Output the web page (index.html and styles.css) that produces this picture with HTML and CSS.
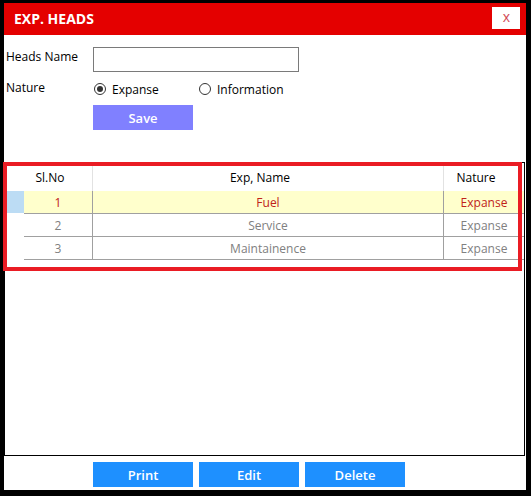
FILE: index.html
```html
<!DOCTYPE html>
<html>
<head>
<meta charset="utf-8">
<link rel="stylesheet" href="styles.css">
</head>
<body>
<div class="window">
  <div class="titlebar">
    <span class="title">EXP. HEADS</span>
    <button class="close">x</button>
  </div>
  <div class="form">
    <div class="field">
      <span class="label label-top">Heads Name</span>
      <input class="textbox" type="text">
    </div>
    <div class="field radio-row">
      <span class="label">Nature</span>
      <label class="radio radio-first"><input type="radio" name="nature" checked><span>Expanse</span></label>
      <label class="radio"><input type="radio" name="nature"><span>Information</span></label>
    </div>
    <div class="field">
      <span class="label"></span>
      <button class="btn btn-save">Save</button>
    </div>
  </div>
  <div class="grid">
    <div class="grid-head">
      <div class="hcell hcorner"></div>
      <div class="hcell">Sl.No</div>
      <div class="hcell">Exp, Name</div>
      <div class="hcell hlast">Nature</div>
    </div>
    <div class="grid-row selected">
      <div class="rowhead"></div>
      <div class="cell">1</div>
      <div class="cell">Fuel</div>
      <div class="cell last">Expanse</div>
    </div>
    <div class="grid-row">
      <div class="rowhead"></div>
      <div class="cell">2</div>
      <div class="cell">Service</div>
      <div class="cell last">Expanse</div>
    </div>
    <div class="grid-row">
      <div class="rowhead"></div>
      <div class="cell">3</div>
      <div class="cell">Maintainence</div>
      <div class="cell last">Expanse</div>
    </div>
    <div class="highlight"></div>
  </div>
  <div class="actions">
    <button class="btn btn-blue">Print</button>
    <button class="btn btn-blue">Edit</button>
    <button class="btn btn-blue">Delete</button>
  </div>
</div>
</body>
</html>
```
FILE: styles.css
```css
html, body {
  margin: 0;
  padding: 0;
  background: #000;
}
body {
  width: 531px;
  height: 496px;
  overflow: hidden;
  font-family: "Open Sans", "Noto Sans", sans-serif;
  font-size: 12px;
  color: #000;
}
.window {
  width: 522px;
  height: 487px;
  margin: 3px 5px 6px 4px;
  background: #fff;
  display: flex;
  flex-direction: column;
}
.titlebar {
  height: 32px;
  flex: 0 0 32px;
  background: #e40000;
  display: flex;
  align-items: center;
  justify-content: space-between;
  padding-left: 10px;
  box-sizing: border-box;
}
.title {
  color: #fff;
  font-weight: 700;
  font-size: 14px;
  line-height: 18px;
}
.close {
  width: 28px;
  height: 22px;
  margin-right: 6px;
  margin-top: -2px;
  background: #fff;
  border: none;
  color: #d24a55;
  font-family: "Open Sans", sans-serif;
  font-size: 14px;
  line-height: 18px;
  padding: 0 0 2px 1px;
}
.form {
  padding: 12px 0 0 2px;
  display: flex;
  flex-direction: column;
}
.field {
  display: flex;
  align-items: flex-start;
}
.label {
  width: 87px;
  flex: 0 0 87px;
  line-height: 18px;
}
.label-top {
  padding-top: 1px;
}
.textbox {
  width: 206px;
  height: 25px;
  box-sizing: border-box;
  border: 1px solid #7a7a7a;
  margin: 0;
  padding: 0;
  background: #fff;
}
.radio-row {
  margin-top: 7px;
  height: 20px;
  align-items: center;
}
.radio-row .label {
  margin-top: -2px;
}
.radio {
  display: flex;
  align-items: center;
  gap: 6px;
  line-height: 18px;
  font-size: 12px;
}
.radio-first {
  width: 105px;
  margin-left: 1px;
}
.radio span {
  padding-top: 1px;
}
.radio input {
  appearance: none;
  -webkit-appearance: none;
  margin: 0;
  width: 12px;
  height: 12px;
  border: 1px solid #333;
  border-radius: 50%;
  box-sizing: border-box;
  background: #fff;
  position: relative;
}
.radio input:checked::after {
  content: "";
  position: absolute;
  left: 2px;
  top: 2px;
  width: 6px;
  height: 6px;
  border-radius: 50%;
  background: #333;
}
.field:last-child {
  margin-top: 6px;
}
.btn {
  width: 100px;
  height: 25px;
  border: none;
  margin: 0;
  padding: 0;
  color: #fff;
  font-family: "Open Sans", sans-serif;
  font-weight: 600;
  font-size: 13px;
  line-height: 18px;
}
.btn-save {
  background: #8080ff;
}
.btn-blue {
  background: #1e90ff;
}
.grid {
  position: relative;
  margin-top: 32px;
  margin-right: 1px;
  flex: 1 1 auto;
  border: 1px solid #000;
  background: #fff;
}
.grid-head,
.grid-row {
  display: grid;
  grid-template-columns: 19px 69px 351px 1fr;
}
.grid-head {
  height: 28px;
}
.hcell {
  display: flex;
  align-items: center;
  justify-content: center;
  padding-right: 16px;
  border-right: 1px solid #e2e2e2;
  font-size: 12px;
  padding-top: 1px;
}
.hcorner {
  border-right: none;
  padding-right: 0;
}
.hlast {
  border-right: none;
}
.grid-row {
  height: 23px;
  color: #808080;
}
.cell {
  display: flex;
  align-items: center;
  justify-content: center;
  border-bottom: 1px solid #a0a0a0;
  border-right: 1px solid #a0a0a0;
  box-sizing: border-box;
  padding-top: 1px;
}
.cell.last {
  border-right: none;
}
.selected .cell {
  background: #ffffcc;
  color: #c0221a;
}
.selected .rowhead {
  background: #bcdcf4;
  margin-bottom: 1px;
}
.highlight {
  position: absolute;
  left: -2px;
  top: -1px;
  width: 519px;
  height: 109px;
  border: 4px solid #ea1c24;
  box-sizing: border-box;
  pointer-events: none;
}
.actions {
  display: flex;
  gap: 6px;
  padding-left: 89px;
  margin-top: 6px;
  margin-bottom: 3px;
}
```
